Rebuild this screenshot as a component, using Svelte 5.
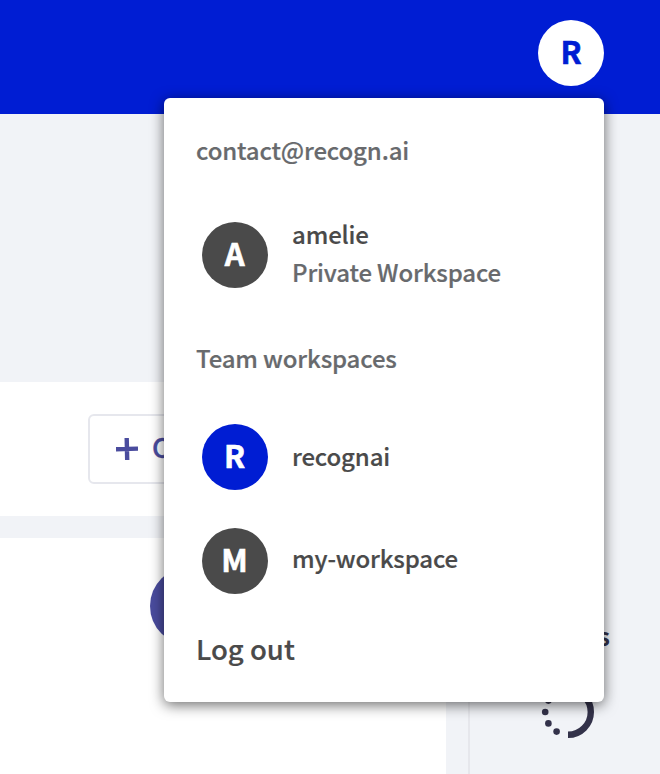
<script>
  const teams = [
    { name: 'recognai', active: true },
    { name: 'my-workspace', active: false }
  ];
</script>

<div class="app">
  <header><div class="avatar user">R</div></header>
  <div class="hero"></div>
  <div class="toolbar">
    <div class="button">
      <svg width="22" height="22" viewBox="0 0 22 22"><path d="M0 11.2 22 10.6M10.7 0 11.2 22" stroke="#4a4c9e" stroke-width="4.4" /></svg>
      <span>C</span>
    </div>
  </div>
  <div class="body">
    <main><div class="dot"></div></main>
    <aside>
      <div class="label">s</div>
      <svg class="spinner" width="56" height="56" viewBox="-28 -28 56 56" fill="#33324a">
        <path d="M0 -22.8A22.8 22.8 0 0 1 0 22.8" fill="none" stroke="#33324a" stroke-width="6.4" />
        <circle cx="-22.8" cy="0" r="3.3" />
        <circle cx="-19.6" cy="11.4" r="3.3" />
        <circle cx="-11.4" cy="19.6" r="3.3" />
        <circle cx="-19.6" cy="-11.4" r="3.3" />
      </svg>
    </aside>
  </div>

  <div class="menu">
    <p class="email">contact@recogn.ai</p>
    <div class="row private">
      <div class="avatar">A</div>
      <div class="names">
        <span class="amelie">amelie</span>
        <span class="sub">Private Workspace</span>
      </div>
    </div>
    <p class="heading">Team workspaces</p>
    {#each teams as team}
      <div class="row team">
        <div class="avatar" class:active={team.active}>{team.name[0].toUpperCase()}</div>
        <span class="name" class:second={!team.active}>{team.name}</span>
      </div>
    {/each}
    <p class="logout">Log out</p>
  </div>
</div>

<style>
  .app {
    position: relative;
    width: 660px;
    height: 774px;
    overflow: hidden;
    display: flex;
    flex-direction: column;
    background: #f1f3f7;
    font-family: 'Noto Sans CJK SC', 'Noto Sans CJK JP', sans-serif;
    font-weight: 500;
    font-size: 24px;
    line-height: 38px;
    color: #4a4a4a;
  }
  header {
    height: 114px;
    box-sizing: border-box;
    padding: 20px 56px 0 0;
    display: flex;
    justify-content: flex-end;
    background: #001dd3;
  }
  .avatar {
    width: 66px;
    height: 66px;
    box-sizing: border-box;
    padding-right: 1px;
    flex: none;
    border-radius: 50%;
    background: #4a4a4a;
    color: #fff;
    font-size: 31px;
    font-weight: 700;
    line-height: 61px;
    text-align: center;
    -webkit-text-stroke: 0.6px currentColor;
  }
  .avatar.user { background: #fff; color: #001dd3; padding-right: 0; }
  .avatar.active { background: #001dd3; }
  .hero { height: 268px; }
  .toolbar {
    width: 446px;
    height: 134px;
    box-sizing: border-box;
    padding: 32px 0 0 88px;
    background: #fff;
  }
  .button {
    width: 250px;
    height: 70px;
    box-sizing: border-box;
    border: 2px solid #e6e7ed;
    border-radius: 6px;
    padding-left: 26px;
    display: flex;
    align-items: center;
    gap: 14px;
    color: #4a4c9e;
    font-size: 27px;
    -webkit-text-stroke: 0.3px currentColor;
  }
  .button span { padding-bottom: 4px; }
  .body { display: flex; height: 236px; margin-top: 22px; }
  main {
    width: 446px;
    box-sizing: border-box;
    padding: 29px 0 0 150px;
    background: #fff;
  }
  .dot { width: 78px; height: 78px; border-radius: 50%; background: #4a4c9e; }
  aside {
    flex: 1;
    margin-left: 22px;
    border-left: 2px solid #e6e7ec;
    display: flex;
    flex-direction: column;
    padding: 79px 50px 0 70px;
    color: #33324a;
  }
  .label { text-align: right; font-weight: 700; }
  .spinner { margin-top: 29px; flex: none; }
  .menu {
    position: absolute;
    left: 164px;
    top: 98px;
    width: 440px;
    height: 604px;
    box-sizing: border-box;
    padding: 33px 32px 0;
    border-radius: 6px;
    background: #fff;
    box-shadow: 0 3px 14px rgba(0, 0, 0, 0.58);
    white-space: nowrap;
    letter-spacing: -0.15px;
    -webkit-text-stroke: 0.2px currentColor;
  }
  p { margin: 0; }
  .email, .sub, .heading { color: #686a6d; }
  .row { display: flex; align-items: center; gap: 24px; padding-left: 6px; }
  .private { height: 76px; margin-top: 48px; }
  .names { display: flex; flex-direction: column; padding-bottom: 4px; }
  .heading { margin-top: 46px; }
  .name { padding-bottom: 2px; }
  .name.second { padding-bottom: 6px; }
  .team { height: 66px; margin-top: 47px; }
  .team + .team { margin-top: 38px; }
  .logout { font-size: 27.5px; letter-spacing: 0; margin-top: 35px; }
</style>
